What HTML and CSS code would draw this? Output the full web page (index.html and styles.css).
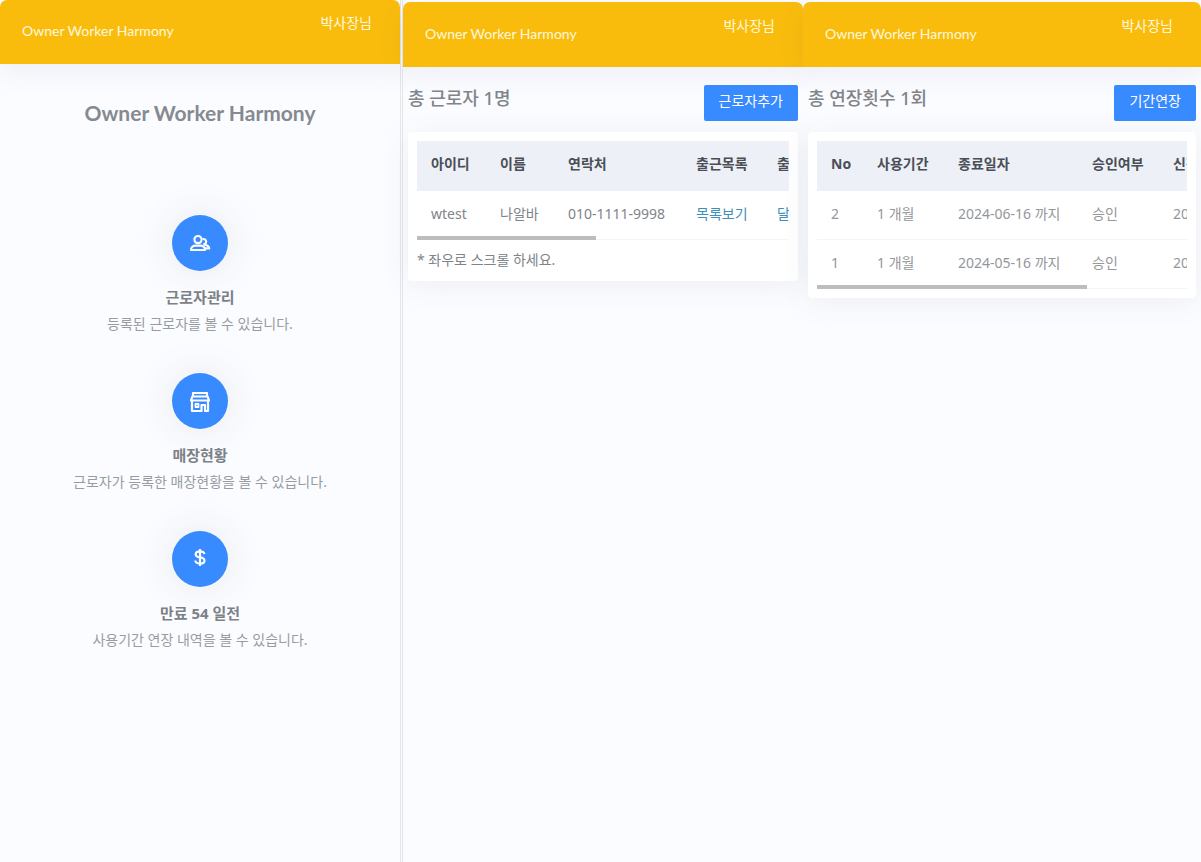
FILE: index.html
```
<!DOCTYPE html>
<html lang="ko">
<head>
<meta charset="utf-8">
<meta name="viewport" content="width=device-width, initial-scale=1">
<title>Owner Worker Harmony</title>
<link rel="stylesheet" href="styles.css">
</head>
<body>
<div class="board">
  <section class="screen">
    <header class="topbar">
      <a class="brand" href="#">Owner Worker Harmony</a>
      <span class="user">박사장님</span>
    </header>
    <main class="home">
      <h1 class="home-title">Owner Worker Harmony</h1>
      <div class="features">
        <article class="feature">
          <a class="feature-icon" href="#" aria-label="근로자관리">
            <svg viewBox="0 0 24 24" width="24" height="24" fill="none" stroke="currentColor" stroke-width="2.200" stroke-linejoin="round"><circle cx="10" cy="8.600" r="3.600"/><path d="M3 19c0-2.800 2.200-4.400 4.600-4.400h4.800c2.400 0 4.600 1.600 4.600 4.400z"/><path d="M14.600 8.200a2.600 2.600 0 1 1 .6 5M16.200 14c2.800-.2 5 1.200 5 3.400h-4"/></svg>
          </a>
          <h2 class="feature-name">근로자관리</h2>
          <p class="feature-text">등록된 근로자를 볼 수 있습니다.</p>
        </article>
        <article class="feature">
          <a class="feature-icon" href="#" aria-label="매장현황">
            <svg viewBox="0 0 24 24" width="24" height="24" fill="none" stroke="currentColor" stroke-width="2.200" stroke-linejoin="round"><path d="M5 4h14v3.500H5zM4.400 7.500h15.200l1.400 4H3zM4 11.500V22h9.500v-6h3.500v6h3V11.500"/><path d="M7.500 15h3v3h-3z" stroke-width="1.800"/></svg>
          </a>
          <h2 class="feature-name">매장현황</h2>
          <p class="feature-text">근로자가 등록한 매장현황을 볼 수 있습니다.</p>
        </article>
        <article class="feature">
          <a class="feature-icon" href="#" aria-label="사용기간 연장">
            <svg viewBox="0 0 24 24" width="24" height="24" fill="none" stroke="currentColor" stroke-width="2.200"><path d="M12 2v17M16.400 7.200C16.200 5.300 14.500 4.400 12 4.400S7.700 5.500 7.700 7.400c0 4.500 8.800 1.600 8.800 6.100 0 2-1.900 3.100-4.500 3.100s-4.500-1.100-4.700-3.100"/></svg>
          </a>
          <h2 class="feature-name">만료 54 일전</h2>
          <p class="feature-text">사용기간 연장 내역을 볼 수 있습니다.</p>
        </article>
      </div>
    </main>
  </section>

  <section class="screen screen-inset">
    <header class="topbar">
      <a class="brand" href="#">Owner Worker Harmony</a>
      <span class="user">박사장님</span>
    </header>
    <main class="list">
      <div class="list-head">
        <h1 class="list-title">총 근로자 1명</h1>
        <button class="action" type="button">근로자추가</button>
      </div>
      <div class="card">
        <div class="scroller">
          <table class="grid">
            <colgroup><col class="col-id"><col class="col-name"><col class="col-wide"><col class="col-mid"><col class="col-mid"></colgroup>
            <thead><tr><th>아이디</th><th>이름</th><th>연락처</th><th>출근목록</th><th>출근달력</th></tr></thead>
            <tbody><tr><td>wtest</td><td>나알바</td><td>010-1111-9998</td><td><a href="#">목록보기</a></td><td><a href="#">달력보기</a></td></tr></tbody>
          </table>
          <div class="thumb thumb-half"></div>
        </div>
        <p class="hint">* 좌우로 스크롤 하세요.</p>
      </div>
    </main>
  </section>

  <section class="screen screen-inset">
    <header class="topbar">
      <a class="brand" href="#">Owner Worker Harmony</a>
      <span class="user">박사장님</span>
    </header>
    <main class="list">
      <div class="list-head">
        <h1 class="list-title">총 연장횟수 1회</h1>
        <button class="action" type="button">기간연장</button>
      </div>
      <div class="card">
        <div class="scroller">
          <table class="grid grid-muted">
            <colgroup><col class="col-no"><col class="col-mid"><col class="col-date"><col class="col-mid"><col class="col-date"></colgroup>
            <thead><tr><th>No</th><th>사용기간</th><th>종료일자</th><th>승인여부</th><th>신청일자</th></tr></thead>
            <tbody>
              <tr><td>2</td><td>1 개월</td><td>2024-06-16 까지</td><td>승인</td><td>2024-04-23</td></tr>
              <tr><td>1</td><td>1 개월</td><td>2024-05-16 까지</td><td>승인</td><td>2024-04-16</td></tr>
            </tbody>
          </table>
          <div class="thumb thumb-long"></div>
        </div>
      </div>
    </main>
  </section>
</div>
</body>
</html>
```
FILE: styles.css
```
* { box-sizing: border-box; }

body {
  margin: 0;
  background: #fbfcff;
  color: #808489;
  font: 14px/20px "Noto Sans", "Noto Sans CJK KR", sans-serif;
}

h1, h2, p { margin: 0; }
a { color: inherit; text-decoration: none; }

.board {
  display: grid;
  grid-template-columns: 401fr 402fr 398fr;
  min-height: 100vh;
}

.screen {
  min-width: 0;
}
.screen:first-child { border-right: 1px solid #e4e6ea; }
.screen-inset { padding-top: 2px; }
.screen-inset:nth-child(2) {
  margin-left: 1px;
  border-left: 1px solid #e4e6ea;
}

.topbar {
  display: flex;
  justify-content: space-between;
  height: 65px;
  padding: 14px 28px 0 22px;
  border-radius: 7px 7px 0 0;
  background: #f9bc0d;
  color: #fff8dc;
  box-shadow: 0 8px 28px rgba(60, 75, 110, 0.07);
}
.screen:first-child .topbar { height: 64px; padding-top: 13px; }
.brand { padding-top: 8px; font-family: Lato, sans-serif; }

.home {
  padding: 36px 20px;
  text-align: center;
}
.home-title {
  font: bold 21px/26px Lato, sans-serif;
  color: #858a90;
}
.features {
  display: grid;
  gap: 34px;
  padding-top: 89px;
}
.feature {
  display: flex;
  flex-direction: column;
  align-items: center;
}
.feature-icon {
  display: grid;
  place-items: center;
  width: 56px;
  height: 56px;
  margin-bottom: 14px;
  border-radius: 50%;
  background: #388aff;
  color: #fff;
  box-shadow: 0 0 40px rgba(50, 60, 80, 0.1);
}
.feature-name {
  font-size: 15px;
  line-height: 24px;
  color: #7c8187;
}
.feature-text {
  line-height: 30px;
  color: #989ca1;
}

.list { padding: 18px 5px; }
.list-head {
  display: flex;
  justify-content: space-between;
  margin-bottom: 11px;
}
.list-title {
  font-size: 18px;
  font-weight: 500;
  line-height: 26px;
}
.action {
  height: 36px;
  padding: 0 15px 4px;
  border: 0;
  border-radius: 2px;
  background: #388aff;
  color: #fff;
  font: inherit;
}

.card {
  padding: 9px;
  border-radius: 4px;
  background: #fff;
  box-shadow: 0 4px 30px rgba(60, 75, 110, 0.08);
}
.scroller {
  position: relative;
  overflow: hidden;
}
.grid {
  width: 1px;
  table-layout: fixed;
  border-spacing: 0;
  text-align: left;
  white-space: nowrap;
}
.grid th {
  height: 50px;
  padding: 0 14px 4px;
  background: #edf0f7;
  color: #4a4e55;
  font-weight: bold;
}
.grid td {
  height: 49px;
  padding: 0 14px 2px;
  border-bottom: 1px solid #f3f4f6;
}
.grid a { color: #3f8fb8; }
.grid-muted td { color: #93979b; }

.col-no { width: 46px; }
.col-id { width: 69px; }
.col-name { width: 68px; }
.col-mid { width: 81px; }
.col-wide { width: 128px; }
.col-date { width: 134px; }

.thumb {
  position: absolute;
  left: 0;
  bottom: 0;
  height: 4px;
  background: #bdbdbd;
}
.thumb-half { width: 48%; }
.thumb-long { width: 73%; }

.hint { padding: 10px 0 2px; }
```
